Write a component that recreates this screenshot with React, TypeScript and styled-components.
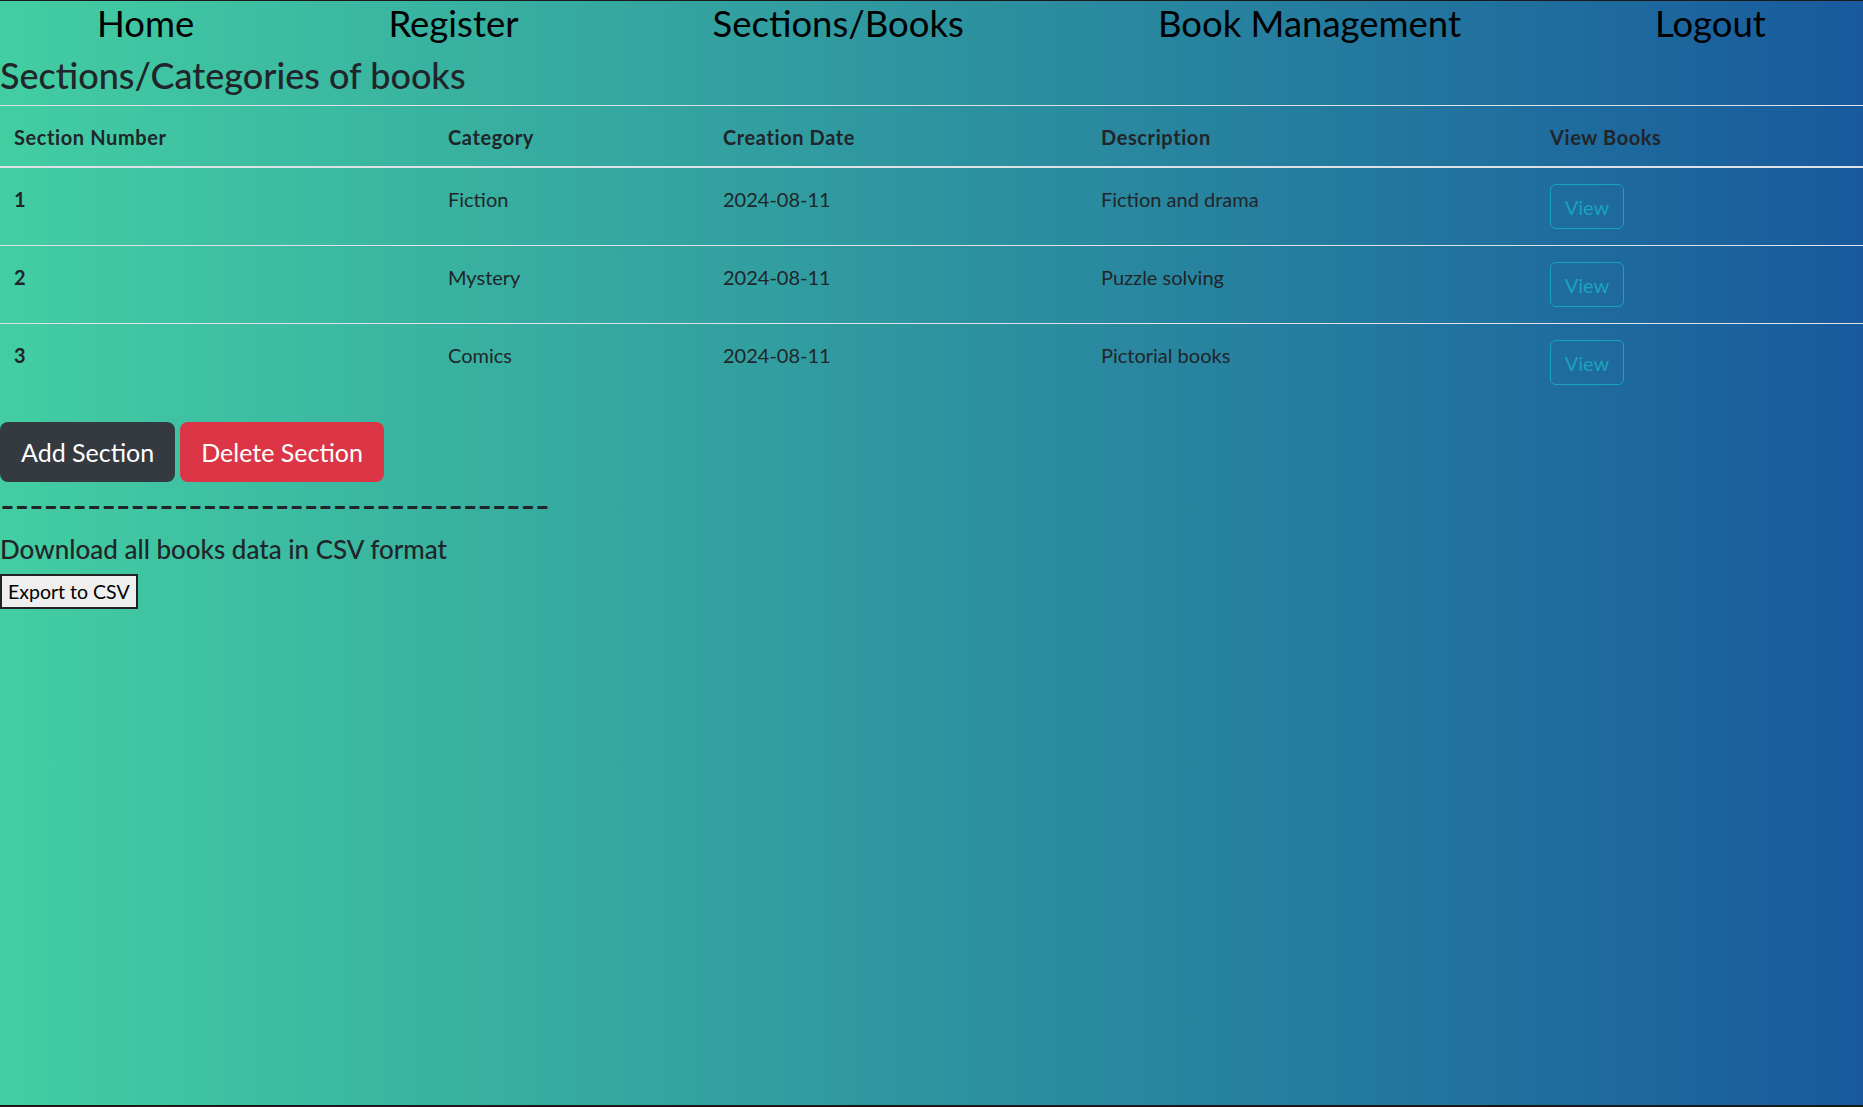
import styled, { createGlobalStyle } from "styled-components";

const GlobalStyle = createGlobalStyle`
  html, body {
    margin: 0;
    padding: 0;
  }
  body {
    font-family: "Lato", "Open Sans", sans-serif;
    color: #212529;
    background: linear-gradient(to right, #43cea2, #185a9d);
  }
  * {
    box-sizing: border-box;
  }
`;

type Section = {
  id: number;
  category: string;
  created: string;
  description: string;
};

const sections: Section[] = [
  { id: 1, category: "Fiction", created: "2024-08-11", description: "Fiction and drama" },
  { id: 2, category: "Mystery", created: "2024-08-11", description: "Puzzle solving" },
  { id: 3, category: "Comics", created: "2024-08-11", description: "Pictorial books" },
];

const navItems = ["Home", "Register", "Sections/Books", "Book Management", "Logout"];

const columns = [
  { label: "Section Number", width: 434 },
  { label: "Category", width: 275 },
  { label: "Creation Date", width: 378 },
  { label: "Description", width: 449 },
  { label: "View Books", width: 327 },
];

function App() {
  return (
    <Page>
      <GlobalStyle />
      <Nav>
        {navItems.map((item) => (
          <NavLink key={item}>{item}</NavLink>
        ))}
      </Nav>
      <Title>Sections/Categories of books</Title>
      <Table>
        <colgroup>
          {columns.map((c) => (
            <col key={c.label} style={{ width: c.width }} />
          ))}
        </colgroup>
        <thead>
          <tr>
            {columns.map((c) => (
              <Th key={c.label}>{c.label}</Th>
            ))}
          </tr>
        </thead>
        <tbody>
          {sections.map((s) => (
            <Row key={s.id}>
              <Td $bold>{s.id}</Td>
              <Td>{s.category}</Td>
              <Td>{s.created}</Td>
              <Td>{s.description}</Td>
              <Td>
                <ViewButton>View</ViewButton>
              </Td>
            </Row>
          ))}
        </tbody>
      </Table>
      <Actions>
        <BigButton $variant="dark">Add Section</BigButton>
        <BigButton $variant="danger">Delete Section</BigButton>
      </Actions>
      <Dashes>--------------------------------------</Dashes>
      <Subtitle>Download all books data in CSV format</Subtitle>
      <ExportButton>Export to CSV</ExportButton>
    </Page>
  );
}

export default App;

const Page = styled.div`
  min-height: 1107px;
  border-top: 1px solid #1a1a1a;
  border-bottom: 2px solid #1a1a1a;
`;

const Nav = styled.nav`
  display: flex;
  justify-content: space-around;
  align-items: center;
  height: 45px;
`;

const NavLink = styled.a`
  font-size: 36.5px;
  line-height: 1;
  color: #000;
  cursor: pointer;
`;

const Title = styled.h2`
  margin: 0;
  font-size: 36px;
  font-weight: 500;
  line-height: 59px;
  color: #212529;
`;

const Table = styled.table`
  width: 100%;
  table-layout: fixed;
  border-collapse: collapse;
  border-top: 1px solid #dee2e6;
  margin-bottom: 21px;
`;

const Th = styled.th`
  text-align: left;
  font-size: 20px;
  font-weight: 700;
  letter-spacing: 0.6px;
  line-height: 30px;
  padding: 16px 14px 14px;
  border-bottom: 2px solid #dee2e6;
`;

const Row = styled.tr`
  & + & td {
    border-top: 1px solid #dee2e6;
  }
`;

const Td = styled.td<{ $bold?: boolean }>`
  vertical-align: top;
  font-size: 20px;
  line-height: 30px;
  font-weight: ${(p) => (p.$bold ? 700 : 400)};
  padding: 16px 14px 16px;
`;

const ViewButton = styled.button`
  display: inline-block;
  width: 74px;
  height: 45px;
  font-family: inherit;
  font-size: 20px;
  color: #1aa3bc;
  background: transparent;
  border: 1px solid #1aa3bc;
  border-radius: 6px;
  cursor: pointer;
`;

const Actions = styled.div`
  display: flex;
  gap: 5px;
`;

const BigButton = styled.button<{ $variant: "dark" | "danger" }>`
  font-family: inherit;
  font-size: 25px;
  line-height: 38px;
  padding: 10px 20px;
  border-radius: 8px;
  border: 1px solid transparent;
  color: #fff;
  background: ${(p) => (p.$variant === "dark" ? "#343a40" : "#dc3545")};
  cursor: pointer;
`;

const Dashes = styled.div`
  margin-top: 3px;
  font-size: 40px;
  font-weight: 400;
  line-height: 40px;
  letter-spacing: -0.4px;
  color: #212529;
  white-space: nowrap;
`;

const Subtitle = styled.h5`
  margin: 9px 0 9px;
  font-size: 26px;
  font-weight: 500;
  line-height: 31px;
  color: #212529;
`;

const ExportButton = styled.button`
  font-family: inherit;
  font-size: 19.5px;
  padding: 2px 6px;
  height: 35px;
  color: #000;
  background: #efefef;
  border: 2px solid #222;
  border-radius: 0;
  cursor: pointer;
`;
